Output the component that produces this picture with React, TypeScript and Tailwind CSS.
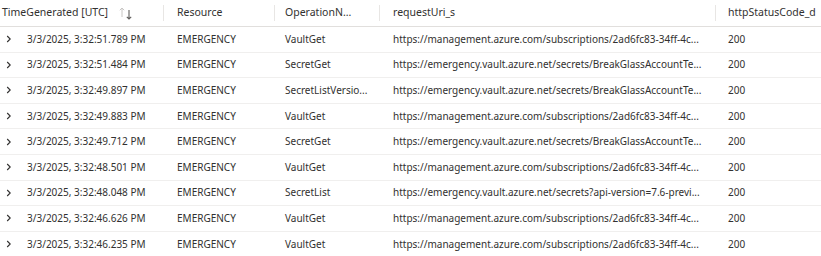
import React from 'react'

const rows = [
  ['3/3/2025, 3:32:51.789 PM', 'EMERGENCY', 'VaultGet', 'https://management.azure.com/subscriptions/2ad6fc83-34ff-4c...', '200'],
  ['3/3/2025, 3:32:51.484 PM', 'EMERGENCY', 'SecretGet', 'https://emergency.vault.azure.net/secrets/BreakGlassAccountTe...', '200'],
  ['3/3/2025, 3:32:49.897 PM', 'EMERGENCY', 'SecretListVersio...', 'https://emergency.vault.azure.net/secrets/BreakGlassAccountTe...', '200'],
  ['3/3/2025, 3:32:49.883 PM', 'EMERGENCY', 'VaultGet', 'https://management.azure.com/subscriptions/2ad6fc83-34ff-4c...', '200'],
  ['3/3/2025, 3:32:49.712 PM', 'EMERGENCY', 'SecretGet', 'https://emergency.vault.azure.net/secrets/BreakGlassAccountTe...', '200'],
  ['3/3/2025, 3:32:48.501 PM', 'EMERGENCY', 'VaultGet', 'https://management.azure.com/subscriptions/2ad6fc83-34ff-4c...', '200'],
  ['3/3/2025, 3:32:48.048 PM', 'EMERGENCY', 'SecretList', 'https://emergency.vault.azure.net/secrets?api-version=7.6-previ...', '200'],
  ['3/3/2025, 3:32:46.626 PM', 'EMERGENCY', 'VaultGet', 'https://management.azure.com/subscriptions/2ad6fc83-34ff-4c...', '200'],
  ['3/3/2025, 3:32:46.235 PM', 'EMERGENCY', 'VaultGet', 'https://management.azure.com/subscriptions/2ad6fc83-34ff-4c...', '200'],
]

function SortIcon() {
  return (
    <svg width="16" height="14" viewBox="0 0 16 14" className="ml-[10px] shrink-0">
      {/* faded up arrow */}
      <path d="M4 11 V2 M1.8 4.2 L4 2 L6.2 4.2" stroke="#c8c6c4" strokeWidth="1" fill="none" />
      {/* dark down arrow */}
      <path d="M11 4 V13 M8.8 10.8 L11 13 L13.2 10.8" stroke="#605e5c" strokeWidth="1.1" fill="none" />
    </svg>
  )
}

function Chevron() {
  return (
    <svg width="8" height="10" viewBox="0 0 8 10">
      <path d="M2.2 2 L5.2 5 L2.2 8" stroke="#323130" strokeWidth="1.1" fill="none" />
    </svg>
  )
}

const cols = 'grid grid-cols-[164px_111px_105px_336px_105px]'

export default function App() {
  return (
    <div
      className="w-[821px] h-[256px] overflow-hidden bg-white text-[10px] text-[#323130]"
      style={{ fontFamily: '"Noto Sans", "Open Sans", sans-serif' }}
    >
      <div className={`${cols} h-[27px] items-center border-b border-[#e1dfdd] text-[10.5px]`}>
        <div className="flex items-center pl-[2px] h-full relative">
          <span className="whitespace-nowrap">TimeGenerated [UTC]</span>
          <SortIcon />
          <span className="absolute right-0 top-[5px] h-[16px] w-px bg-[#e8e6e4]" />
        </div>
        <div className="flex items-center pl-[13px] h-full relative">
          Resource
          <span className="absolute right-0 top-[5px] h-[16px] w-px bg-[#e8e6e4]" />
        </div>
        <div className="flex items-center pl-[10px] h-full relative">
          OperationN...
          <span className="absolute right-0 top-[5px] h-[16px] w-px bg-[#e8e6e4]" />
        </div>
        <div className="flex items-center pl-[13px] h-full relative">
          requestUri_s
          <span className="absolute right-0 top-[5px] h-[16px] w-px bg-[#e8e6e4]" />
        </div>
        <div className="flex items-center pl-[12px] h-full whitespace-nowrap">httpStatusCode_d</div>
      </div>
      {rows.map((r, i) => (
        <div key={i} className={`${cols} h-[25.6px] items-center border-b border-[#f0efee]`}>
          <div className="flex items-center whitespace-nowrap">
            <span className="w-[27px] pl-[5px] flex items-center shrink-0">
              <Chevron />
            </span>
            {r[0]}
          </div>
          <div className="pl-[13px] whitespace-nowrap">{r[1]}</div>
          <div className="pl-[10px] whitespace-nowrap">{r[2]}</div>
          <div className="pl-[13px] whitespace-nowrap overflow-hidden">{r[3]}</div>
          <div className="pl-[12px]">{r[4]}</div>
        </div>
      ))}
    </div>
  )
}
